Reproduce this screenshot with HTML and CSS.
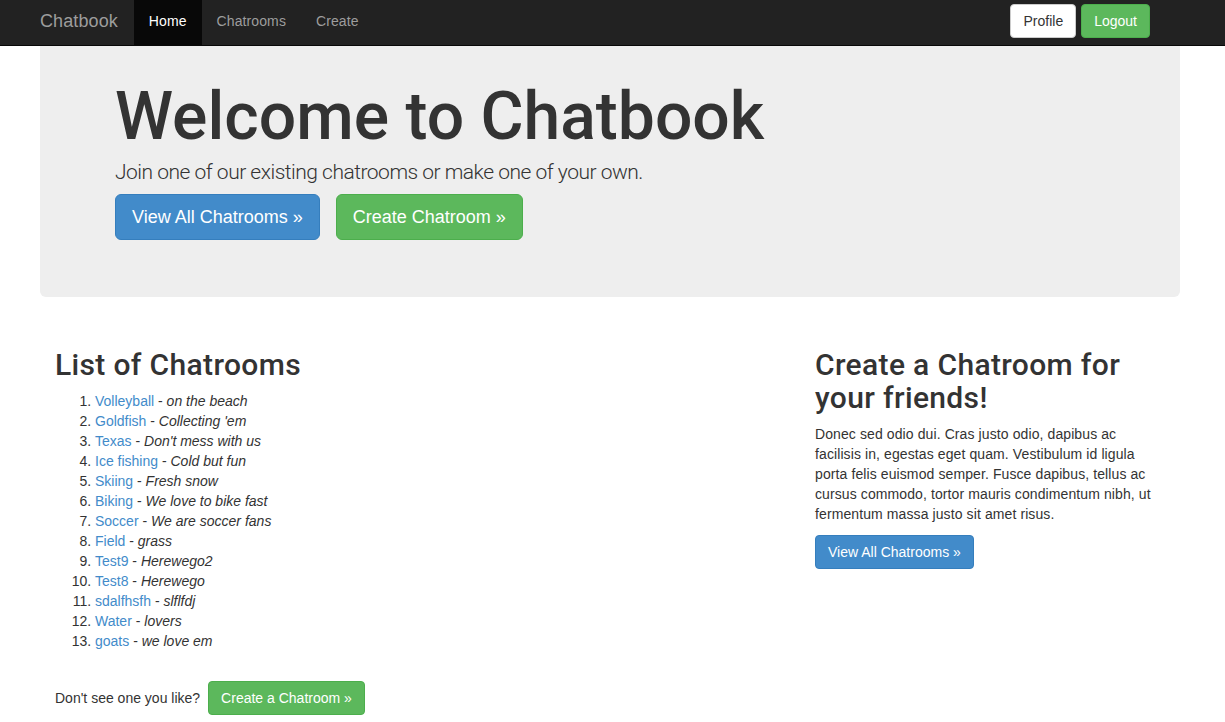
FILE: index.html
```html
<!DOCTYPE html>
<html lang="en">
<head>
<meta charset="utf-8">
<title>Chatbook</title>
<link rel="stylesheet" href="styles.css">
</head>
<body>
<nav class="navbar">
  <div class="nav-left">
    <a class="brand" href="#">Chatbook</a>
    <a class="nav-link active" href="#">Home</a>
    <a class="nav-link" href="#">Chatrooms</a>
    <a class="nav-link" href="#">Create</a>
  </div>
  <div class="nav-right">
    <a class="btn btn-default" href="#">Profile</a>
    <a class="btn btn-success" href="#">Logout</a>
  </div>
</nav>

<div class="container">
  <section class="jumbotron">
    <h1 class="jumbo-title">Welcome to Chatbook</h1>
    <p class="jumbo-lead">Join one of our existing chatrooms or make one of your own.</p>
    <div class="jumbo-actions">
      <a class="btn btn-lg btn-primary" href="#">View All Chatrooms &raquo;</a>
      <a class="btn btn-lg btn-success" href="#">Create Chatroom &raquo;</a>
    </div>
  </section>

  <div class="row">
    <div class="col-main">
      <h2 class="section-title">List of Chatrooms</h2>
      <ol class="room-list">
        <li><a href="#">Volleyball</a> - <em>on the beach</em></li>
        <li><a href="#">Goldfish</a> - <em>Collecting 'em</em></li>
        <li><a href="#">Texas</a> - <em>Don't mess with us</em></li>
        <li><a href="#">Ice fishing</a> - <em>Cold but fun</em></li>
        <li><a href="#">Skiing</a> - <em>Fresh snow</em></li>
        <li><a href="#">Biking</a> - <em>We love to bike fast</em></li>
        <li><a href="#">Soccer</a> - <em>We are soccer fans</em></li>
        <li><a href="#">Field</a> - <em>grass</em></li>
        <li><a href="#">Test9</a> - <em>Herewego2</em></li>
        <li><a href="#">Test8</a> - <em>Herewego</em></li>
        <li><a href="#">sdalfhsfh</a> - <em>slflfdj</em></li>
        <li><a href="#">Water</a> - <em>lovers</em></li>
        <li><a href="#">goats</a> - <em>we love em</em></li>
      </ol>
      <div class="suggest">
        <span>Don't see one you like?</span>
        <a class="btn btn-success" href="#">Create a Chatroom &raquo;</a>
      </div>
    </div>
    <div class="col-side">
      <h2 class="section-title">Create a Chatroom for your friends!</h2>
      <p class="side-text">Donec sed odio dui. Cras justo odio, dapibus ac facilisis in, egestas eget quam. Vestibulum id ligula porta felis euismod semper. Fusce dapibus, tellus ac cursus commodo, tortor mauris condimentum nibh, ut fermentum massa justo sit amet risus.</p>
      <div class="side-actions">
        <a class="btn btn-primary" href="#">View All Chatrooms &raquo;</a>
      </div>
    </div>
  </div>
</div>
</body>
</html>
```

FILE: styles.css
```css
* { box-sizing: border-box; }

html, body {
  margin: 0;
  padding: 0;
}

body {
  font-family: "Liberation Sans", Arial, sans-serif;
  font-size: 14px;
  line-height: 20px;
  color: #333;
  background: #fff;
}

a { text-decoration: none; color: #428bca; }

/* navbar */
.navbar {
  height: 46px;
  background: #222;
  border-bottom: 1px solid #080808;
  display: flex;
  justify-content: space-between;
  padding: 0 75px 0 25px;
}

.nav-left { display: flex; }

.brand {
  font-size: 18px;
  line-height: 20px;
  padding: 11px 16px 14px 15px;
  color: #9d9d9d;
  letter-spacing: 0.1px;
}

.nav-link {
  padding: 11px 15px 14px;
  color: #9d9d9d;
  line-height: 20px;
  letter-spacing: 0.1px;
}

.nav-link.active {
  background: #080808;
  color: #fff;
}

.nav-right {
  display: flex;
  gap: 5px;
  align-items: flex-start;
  padding-top: 4px;
}

/* buttons */
.btn {
  display: inline-block;
  padding: 6px 12px;
  font-size: 14px;
  line-height: 20px;
  border: 1px solid transparent;
  border-radius: 4px;
  white-space: nowrap;
}

.btn-default { background: #fff; color: #333; border-color: #ccc; }
.btn-success { background: #5cb85c; color: #fff; border-color: #4cae4c; }
.btn-primary { background: #428bca; color: #fff; border-color: #357ebd; }

.btn-lg {
  padding: 10px 16px;
  font-size: 18px;
  line-height: 24px;
  border-radius: 6px;
}

/* container */
.container {
  width: 1140px;
  margin-left: 40px;
}

.jumbotron {
  background: #eee;
  border-radius: 0 0 6px 6px;
  padding: 34px 75px 57px;
  margin-bottom: 51px;
}

.jumbo-title {
  margin: 0;
  font-family: Roboto, "Liberation Sans", sans-serif;
  font-size: 66px;
  line-height: 73px;
  font-weight: 500;
  color: #333;
  letter-spacing: 0;
}

.jumbo-lead {
  margin: 4px 0 0;
  font-family: Roboto, "Liberation Sans", sans-serif;
  font-weight: 300;
  font-size: 21px;
  line-height: 30px;
  letter-spacing: -0.5px;
}

.jumbo-actions {
  display: flex;
  gap: 16px;
  margin-top: 7px;
}

/* lower row */
.row {
  display: flex;
}

.col-main {
  width: 760px;
  padding: 0 15px;
}

.col-side {
  width: 380px;
  padding: 0 15px;
}

.section-title {
  margin: 0 0 10px;
  font-family: Roboto, "Liberation Sans", sans-serif;
  font-size: 30px;
  line-height: 33px;
  font-weight: 500;
  letter-spacing: 0.35px;
}

.room-list {
  margin: 1px 0 0;
  padding-left: 40px;
}

.suggest {
  margin-top: 30px;
  display: flex;
  align-items: center;
  gap: 8px;
}

.side-text {
  margin: 1px 0 10px;
  letter-spacing: 0.1px;
}

.side-actions {
  padding-top: 1px;
}
```
